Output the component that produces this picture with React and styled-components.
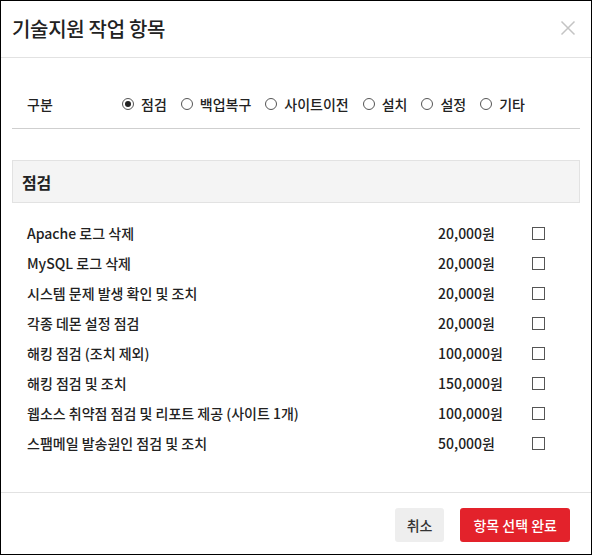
import React from 'react'
import styled, { createGlobalStyle } from 'styled-components'

const GlobalStyle = createGlobalStyle`
    html, body {
        margin: 0;
        padding: 0;
        background: #fff;
    }
    * {
        box-sizing: border-box;
    }
    body {
        font-family: "Noto Sans CJK KR", "Noto Sans", sans-serif;
        color: #222;
    }
`

const Modal = styled.div`
    width: 592px;
    height: 555px;
    border: 1px solid #000;
    background: #fff;
    display: flex;
    flex-direction: column;
`

const Header = styled.div`
    height: 57px;
    border-bottom: 1px solid #e2e2e2;
    display: flex;
    align-items: center;
    justify-content: space-between;
    padding: 0 15px 2px 11px;
`

const Title = styled.h2`
    margin: 0;
    font-size: 20px;
    font-weight: 500;
    letter-spacing: -0.3px;
    color: #222;
`

const CloseBtn = styled.button`
    border: 0;
    background: none;
    padding: 0;
    width: 16px;
    height: 16px;
    cursor: pointer;
    display: flex;
`

const Body = styled.div`
    flex: 1;
    padding: 0 11px;
`

const FilterRow = styled.div`
    display: flex;
    align-items: center;
    height: 71px;
    padding: 22px 0 0 15px;
    border-bottom: 1px solid #cfcfcf;
`

const FilterLabel = styled.span`
    width: 95px;
    font-size: 14px;
    font-weight: 500;
    color: #222;
`

const RadioGroup = styled.div`
    display: flex;
    align-items: center;
    gap: 14px;
`

const RadioLabel = styled.label`
    display: flex;
    align-items: center;
    gap: 7px;
    font-size: 14px;
    font-weight: 500;
    color: #222;
    cursor: pointer;
`

const RadioDot = styled.span`
    width: 12px;
    height: 12px;
    border-radius: 50%;
    border: 1px solid #555;
    display: flex;
    align-items: center;
    justify-content: center;

    &::after {
        content: '';
        width: 6px;
        height: 6px;
        border-radius: 50%;
        background: ${({ checked }) => (checked ? '#222' : 'transparent')};
    }
`

const SectionHead = styled.div`
    margin-top: 31px;
    height: 43px;
    background: #f4f4f4;
    border: 1px solid #e2e2e2;
    display: flex;
    align-items: center;
    padding: 0 9px;
    font-size: 16px;
    font-weight: 700;
    letter-spacing: -0.3px;
    color: #222;
`

const ItemList = styled.ul`
    list-style: none;
    margin: 15px 0 0;
    padding: 0 35px 0 15px;
`

const Item = styled.li`
    height: 30px;
    display: flex;
    align-items: center;
    font-size: 14px;
    font-weight: 500;
    color: #222;
`

const ItemName = styled.span`
    flex: 1;
`

const Price = styled.span`
    width: 94px;
`

const Check = styled.span`
    width: 13px;
    height: 13px;
    border: 1px solid #555;
    background: #fff;
`

const Footer = styled.div`
    border-top: 1px solid #e2e2e2;
    display: flex;
    justify-content: flex-end;
    gap: 16px;
    padding: 15px 21px 12px;
`

const Button = styled.button`
    height: 34px;
    border: 0;
    border-radius: 3px;
    padding: 0 ${({ primary }) => (primary ? '13px' : '12px')};
    font-family: inherit;
    font-size: 14px;
    font-weight: 500;
    background: ${({ primary }) => (primary ? '#e3222b' : '#eeeeee')};
    color: ${({ primary }) => (primary ? '#fff' : '#333')};
    cursor: pointer;
`

const categories = ['점검', '백업복구', '사이트이전', '설치', '설정', '기타']

const items = [
    { name: 'Apache 로그 삭제', price: '20,000원' },
    { name: 'MySQL 로그 삭제', price: '20,000원' },
    { name: '시스템 문제 발생 확인 및 조치', price: '20,000원' },
    { name: '각종 데몬 설정 점검', price: '20,000원' },
    { name: '해킹 점검 (조치 제외)', price: '100,000원' },
    { name: '해킹 점검 및 조치', price: '150,000원' },
    { name: '웹소스 취약점 점검 및 리포트 제공 (사이트 1개)', price: '100,000원' },
    { name: '스팸메일 발송원인 점검 및 조치', price: '50,000원' },
]

function App() {
    return (
        <>
            <GlobalStyle />
            <Modal>
                <Header>
                    <Title>기술지원 작업 항목</Title>
                    <CloseBtn aria-label='닫기'>
                        <svg width='16' height='16' viewBox='0 0 16 16'>
                            <path d='M1.5 1.5 L14.5 14.5 M14.5 1.5 L1.5 14.5' stroke='#c4c4c4' strokeWidth='1.5' />
                        </svg>
                    </CloseBtn>
                </Header>
                <Body>
                    <FilterRow>
                        <FilterLabel>구분</FilterLabel>
                        <RadioGroup>
                            {categories.map((c, i) => (
                                <RadioLabel key={c}>
                                    <RadioDot checked={i === 0} />
                                    {c}
                                </RadioLabel>
                            ))}
                        </RadioGroup>
                    </FilterRow>
                    <SectionHead>점검</SectionHead>
                    <ItemList>
                        {items.map((it) => (
                            <Item key={it.name}>
                                <ItemName>{it.name}</ItemName>
                                <Price>{it.price}</Price>
                                <Check />
                            </Item>
                        ))}
                    </ItemList>
                </Body>
                <Footer>
                    <Button>취소</Button>
                    <Button primary>항목 선택 완료</Button>
                </Footer>
            </Modal>
        </>
    )
}

export default App
